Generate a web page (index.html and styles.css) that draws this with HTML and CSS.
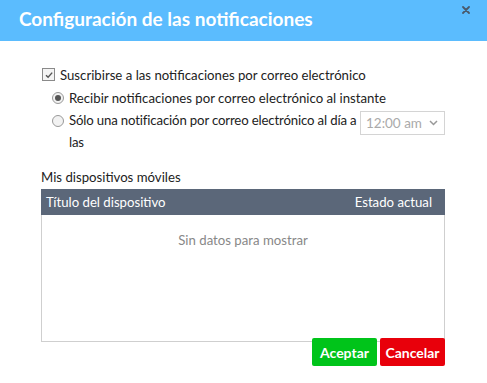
FILE: index.html
```html
<!DOCTYPE html>
<html lang="es">
<head>
<meta charset="utf-8">
<link rel="stylesheet" href="styles.css">
</head>
<body>
<div class="dialog">
  <div class="header">
    <h1 class="title">Configuración de las notificaciones</h1>
    <svg class="close" width="8" height="8" viewBox="0 0 8 8"><path d="M1 1L7 7M7 1L1 7" stroke="#4a5a6c" stroke-width="1.8" stroke-linecap="round"/></svg>
  </div>
  <div class="content">
    <div class="row row-check">
      <span class="checkbox"><svg width="10" height="10" viewBox="0 0 10 10"><path d="M2 5.2L4.1 7.3L8.2 2.6" fill="none" stroke="#555" stroke-width="1.4"/></svg></span>
      <span class="label">Suscribirse a las notificaciones por correo electrónico</span>
    </div>
    <div class="row row-radio">
      <span class="radio checked"><span class="dot"></span></span>
      <span class="label">Recibir notificaciones por correo electrónico al instante</span>
    </div>
    <div class="row row-radio row-daily">
      <span class="radio"></span>
      <span class="label wrap">Sólo una notificación por correo electrónico al día a las</span>
      <div class="select">
        <span>12:00 am</span>
        <svg width="9" height="6" viewBox="0 0 9 6"><path d="M1 1L4.5 4.5L8 1" fill="none" stroke="#999" stroke-width="1.5"/></svg>
      </div>
    </div>
    <div class="section-label">Mis dispositivos móviles</div>
    <div class="table">
      <div class="thead">
        <span>Título del dispositivo</span>
        <span>Estado actual</span>
      </div>
      <div class="tbody">Sin datos para mostrar</div>
    </div>
    <div class="buttons">
      <button class="btn btn-ok">Aceptar</button>
      <button class="btn btn-cancel">Cancelar</button>
    </div>
  </div>
</div>
</body>
</html>
```

FILE: styles.css
```css
html, body {
  margin: 0;
  padding: 0;
  background: #fff;
}
body {
  width: 487px;
  height: 383px;
  overflow: hidden;
  font-family: Lato, "Open Sans", sans-serif;
  font-size: 13.2px;
  color: #222;
}
.header {
  height: 41px;
  background: #5bbcfe;
  display: flex;
  justify-content: space-between;
  align-items: flex-start;
  padding: 0 17px 0 19px;
}
.title {
  margin: 0;
  font-size: 19px;
  font-weight: 700;
  line-height: 38px;
  color: #fff;
}
.close {
  margin-top: 6px;
}
.content {
  padding: 0 42px 0 41px;
}
.row {
  display: flex;
  align-items: center;
  height: 23px;
}
.row-check {
  margin-top: 22px;
}
.checkbox {
  width: 11px;
  height: 11px;
  border: 1px solid #8a8a8a;
  background: #f4f4f4;
  margin: 0 5px 0 1px;
  display: flex;
  align-items: center;
  justify-content: center;
  box-sizing: content-box;
}
.row-radio {
  padding-left: 11px;
}
.radio {
  width: 10px;
  height: 10px;
  border: 1px solid #999;
  border-radius: 50%;
  background: #f2f2f2;
  margin-right: 5px;
  display: flex;
  align-items: center;
  justify-content: center;
  flex: none;
}
.radio .dot {
  width: 6px;
  height: 6px;
  border-radius: 50%;
  background: #555;
}
.row-daily {
  height: auto;
  align-items: flex-start;
}
.row-daily .radio {
  margin-top: 6px;
}
.label.wrap {
  width: 291px;
  flex: none;
  line-height: 22px;
  letter-spacing: -0.15px;
}
.select {
  margin-left: auto;
  margin-top: 2px;
  width: 85px;
  height: 24px;
  border: 1px solid #d4d4d4;
  display: flex;
  align-items: center;
  justify-content: space-between;
  padding: 0 6px 0 5px;
  box-sizing: border-box;
  color: #aaa;
  font-size: 13.5px;
  flex: none;
}
.section-label {
  margin-top: 13px;
  line-height: 22px;
}
.table {
  margin-top: 1px;
  border: 1px solid #cfcfcf;
  border-top: none;
  height: 153px;
  box-sizing: border-box;
}
.thead {
  height: 26px;
  background: #5b6779;
  color: #fff;
  display: flex;
  justify-content: space-between;
  align-items: center;
  padding: 0 13px 0 5px;
  margin: 0 -1px;
}
.tbody {
  text-align: center;
  color: #888;
  padding-top: 17px;
}
.buttons {
  display: flex;
  justify-content: flex-end;
  gap: 3px;
  margin-top: -4px;
}
.btn {
  width: 65px;
  height: 28px;
  border: none;
  border-radius: 2px;
  color: #fff;
  font-family: Lato, sans-serif;
  font-weight: 700;
  font-size: 14px;
  padding: 0;
}
.btn-ok {
  background: #00c41a;
}
.btn-cancel {
  background: #e8000b;
}
```
